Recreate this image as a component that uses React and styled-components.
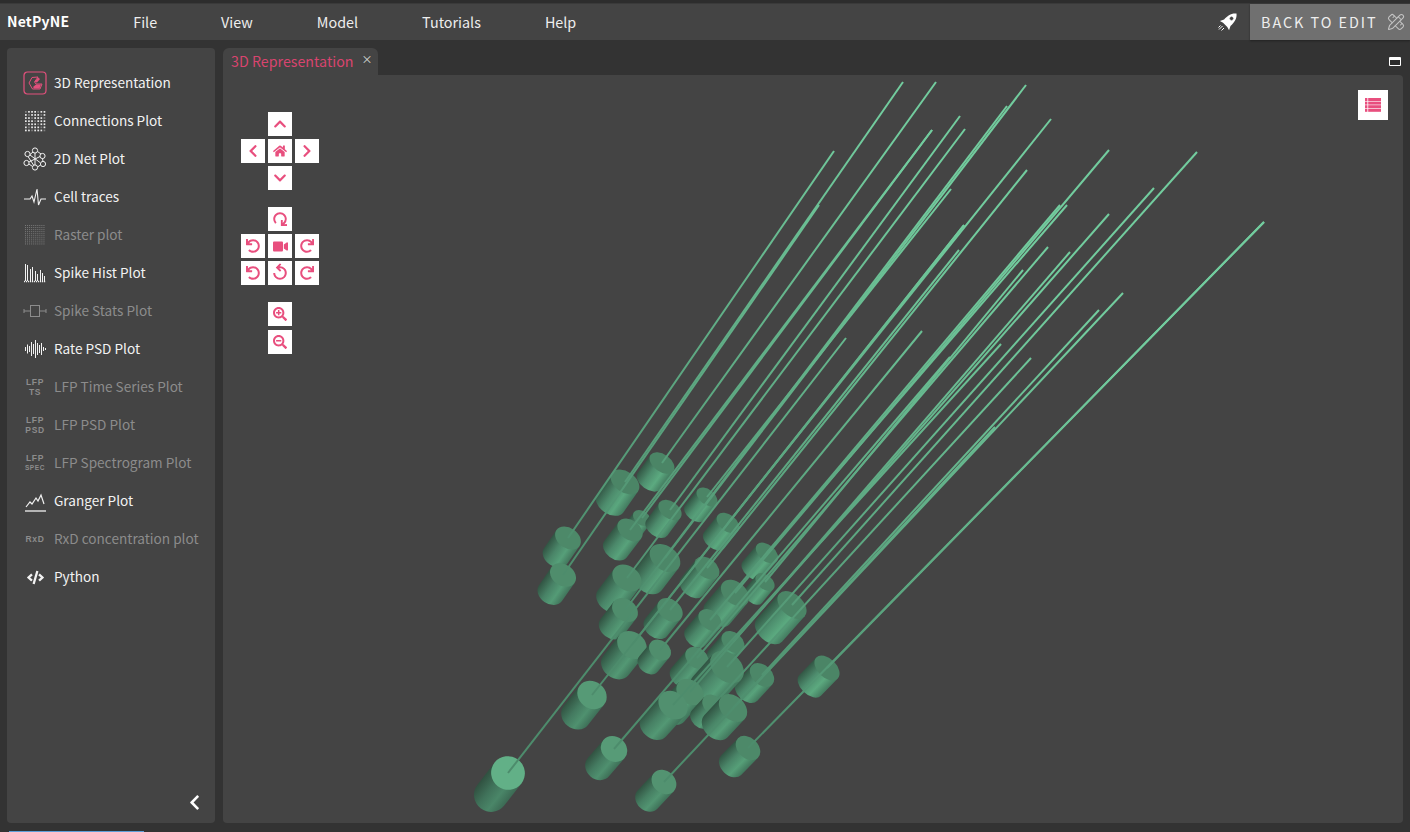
import React from 'react';
import styled, { createGlobalStyle } from 'styled-components';
import {
  FaChevronUp, FaChevronDown, FaChevronLeft, FaChevronRight, FaHome, FaVideo,
  FaUndo, FaRedo, FaSearchPlus, FaSearchMinus, FaCode,
} from 'react-icons/fa';
import { PencilRuler } from 'lucide-react';

const PINK = '#e84f7e';

const GlobalStyle = createGlobalStyle`
  html, body, #root { height: 100%; margin: 0; }
  body {
    background: #333;
    font-family: "Noto Sans CJK SC", "Noto Sans", sans-serif;
    overflow: hidden;
  }
`;

const Page = styled.div`
  display: flex;
  flex-direction: column;
  height: 832px;
  background: #333;
  border-top: 3px solid #2d2d2d;
  box-sizing: border-box;
`;

const TopBar = styled.header`
  display: flex;
  align-items: center;
  gap: 64px;
  height: 37px;
  flex: none;
  padding-left: 7px;
  background: #444;
  border-top: 1px solid #3a3a3a;
  box-sizing: border-box;
`;

const Brand = styled.div`
  font-size: 14px;
  font-weight: 700;
  color: #fff;
  letter-spacing: 0.2px;
  padding-bottom: 2px;
`;

const MenuItem = styled.div`
  font-size: 14.35px;
  color: #eee;
  padding-bottom: 2px;
`;

const TopActions = styled.div`
  display: flex;
  align-items: center;
  align-self: stretch;
  margin-left: auto;
  gap: 11px;
`;

const BackButton = styled.button`
  display: flex;
  align-items: center;
  gap: 9px;
  width: 160px;
  height: 100%;
  padding: 0 0 2px 11px;
  border: none;
  background: #707070;
  color: #eee;
  font: inherit;
  font-size: 14.4px;
  letter-spacing: 1.95px;
  white-space: nowrap;
  box-shadow: 0 1px 2px rgba(0, 0, 0, 0.35);
  svg { color: #c4c4c4; flex: none; margin-top: 2px; }
`;

const Body = styled.div`
  flex: 1;
  min-height: 0;
  display: grid;
  grid-template-columns: 208px 1180px;
  gap: 8px;
  padding: 8px 7px 8px;
`;

const Sidebar = styled.aside`
  display: flex;
  flex-direction: column;
  background: #444;
  border-radius: 4px;
  padding: 16px 12px 12px 16px;
`;

const NavRow = styled.div`
  display: flex;
  align-items: center;
  gap: 7px;
  height: 38px;
  flex: none;
  font-size: 13.6px;
  white-space: nowrap;
  color: ${(p) => (p.$off ? '#8c8c8c' : '#f2f2f2')};
`;

const NavLabel = styled.span`
  padding-bottom: 2px;
`;

const NavIcon = styled.div`
  width: 24px;
  height: 24px;
  flex: none;
  display: flex;
  flex-direction: column;
  align-items: center;
  justify-content: center;
  color: ${(p) => (p.$off ? '#8c8c8c' : '#f2f2f2')};
`;

const LfpTag = styled.span`
  display: block;
  font-family: "Liberation Sans", sans-serif;
  font-size: ${(p) => p.$size}px;
  font-weight: 700;
  line-height: 10px;
  letter-spacing: 0.6px;
  color: #8c8c8c;
`;

const Collapse = styled.div`
  display: flex;
  margin-top: auto;
  align-self: flex-end;
  color: #fff;
`;

const Workspace = styled.main`
  display: flex;
  flex-direction: column;
  min-width: 0;
`;

const TabStrip = styled.div`
  display: flex;
  align-items: stretch;
  justify-content: space-between;
  height: 27px;
  flex: none;
`;

const Tab = styled.div`
  display: flex;
  align-items: center;
  gap: 8px;
  width: 155px;
  box-sizing: border-box;
  padding: 0 0 2px 8px;
  background: #444;
  border-radius: 6px 6px 0 0;
  font-size: 14.25px;
  color: #d9446f;
  white-space: nowrap;
`;

const TabClose = styled.span`
  font-size: 11px;
  line-height: 1;
  color: #ddd;
  margin-top: -2px;
`;

const Maximize = styled.div`
  width: 12px;
  height: 9px;
  margin: 9px 2px 0 0;
  box-sizing: border-box;
  border: 1.5px solid #fff;
  border-top-width: 3px;
  border-radius: 1px;
  background: #2b2b2b;
`;

const Canvas = styled.div`
  position: relative;
  flex: 1;
  min-height: 0;
  background: #444;
  border-radius: 0 4px 4px 4px;
  overflow: hidden;
`;

const Scene = styled.svg`
  display: block;
  width: 100%;
  height: 100%;
`;

const Controls = styled.div`
  position: absolute;
  left: 18px;
  top: 37px;
  display: flex;
  flex-direction: column;
  gap: 17px;
`;

const ControlGroup = styled.div`
  display: grid;
  grid-template-columns: repeat(3, 24px);
  grid-auto-rows: 24px;
  gap: ${(p) => p.$gap || 3}px 3px;
`;

const CtrlButton = styled.button`
  grid-column: ${(p) => p.$col};
  width: 24px;
  height: 24px;
  padding: 0;
  border: none;
  background: #fff;
  color: ${PINK};
  display: flex;
  align-items: center;
  justify-content: center;
  svg { transform: rotate(${(p) => p.$rot || 0}deg); }
`;

const ListButton = styled.button`
  position: absolute;
  top: 15px;
  right: 15px;
  width: 30px;
  height: 30px;
  padding: 0;
  border: none;
  background: #fff;
  color: ${PINK};
  display: flex;
  align-items: center;
  justify-content: center;
`;

const Footer = styled.div`
  height: 1px;
  flex: none;
  padding-left: 9px;
  &::before {
    content: '';
    display: block;
    width: 135px;
    height: 1px;
    background: #5f9fd8;
  }
`;

// face centre, radius, body length, far end of the neurite
const CELLS = [
  [662, 463, 14, 22, 936, 82],
  [625, 482, 16, 26, 903, 82],
  [568, 538, 14, 22, 834, 151],
  [563, 575, 14, 22, 819, 205],
  [707, 497, 12, 20, 951, 189],
  [642, 518, 10, 16, 932, 130],
  [670, 510, 13, 22, 960, 116],
  [630, 530, 14, 24, 932, 130],
  [728, 523, 13, 22, 1051, 119],
  [767, 553, 13, 22, 1067, 205],
  [665, 558, 17, 28, 1026, 85],
  [707, 568, 14, 24, 1027, 170],
  [765, 582, 11, 18, 1023, 270],
  [627, 578, 16, 27, 965, 129],
  [735, 593, 16, 27, 1109, 150],
  [792, 605, 17, 34, 1197, 152],
  [625, 610, 14, 22, 1007, 106],
  [670, 610, 14, 22, 959, 250],
  [710, 620, 13, 22, 1060, 205],
  [733, 642, 13, 22, 1109, 214],
  [632, 645, 16, 26, 964, 225],
  [660, 650, 12, 18, 922, 331],
  [697, 658, 13, 24, 1048, 247],
  [762, 675, 14, 22, 1099, 310],
  [727, 667, 19, 30, 1154, 188],
  [690, 692, 15, 26, 1070, 252],
  [713, 705, 12, 18, 1031, 358],
  [673, 705, 16, 28, 1001, 344],
  [733, 708, 16, 25, 995, 427],
  [592, 695, 15.5, 26, 964, 225],
  [827, 668, 15, 24, 1264, 222],
  [748, 748, 14, 24, 1264, 222],
  [614, 749, 14, 24, 950, 357],
  [664, 782, 13.5, 24, 1123, 293],
  [508, 773, 17, 28, 846, 338],
];

const mix = (a, b, t) => {
  const k = Math.max(0, Math.min(1, t));
  return `rgb(${a.map((v, i) => Math.round(v + (b[i] - v) * k)).join(',')})`;
};

const Cell = ({ id, fx, fy, r, len, tx, ty }) => {
  const angle = (Math.atan2(fy - ty, fx - tx) * 180) / Math.PI;
  const dist = Math.hypot(fx - 508, fy - 773);
  const squash = Math.max(0.6, 0.98 - dist * 0.00105);
  const t = (squash - 0.62) / 0.34;
  const face = mix([75, 133, 102], [98, 176, 135], t * t);
  return (
    <>
      <linearGradient id={`body${id}`} x1="0" y1="0" x2="0" y2="1">
        <stop offset="0" stopColor={mix([68, 124, 96], [60, 106, 84], t)} />
        <stop offset="0.3" stopColor={mix([92, 170, 128], [74, 134, 104], t)} />
        <stop offset="0.62" stopColor={mix([78, 142, 110], [64, 114, 90], t)} />
        <stop offset="1" stopColor={mix([50, 86, 68], [48, 80, 64], t)} />
      </linearGradient>
      <g transform={`translate(${fx} ${fy}) rotate(${angle})`}>
        <path
          d={`M0 ${-r}L${len} ${-r}A${r * squash} ${r} 0 0 1 ${len} ${r}L0 ${r}Z`}
          fill={`url(#body${id})`}
        />
        <ellipse rx={r * squash} ry={r} fill={face} />
      </g>
      <line x1={fx} y1={fy} x2={tx} y2={ty} stroke="url(#neurite)" strokeWidth="2" />
    </>
  );
};

const Dots = ({ n, gap, size, opacity }) => {
  const cells = [];
  for (let y = 0; y < n; y++) {
    for (let x = 0; x < n; x++) {
      const o = typeof opacity === 'function' ? opacity(x, y) : opacity;
      cells.push(<rect key={`${x}-${y}`} x={x * gap} y={y * gap} width={size} height={size} fill="currentColor" opacity={o} />);
    }
  }
  return <g transform="translate(2 2)">{cells}</g>;
};

const Icon = ({ children }) => (
  <svg width="24" height="24" viewBox="0 0 24 24" fill="none" stroke="currentColor" strokeWidth="1">{children}</svg>
);

const Rocket = () => (
  <svg width="22" height="22" viewBox="0 0 22 22">
    <g transform="rotate(45 11 11) translate(11 9)">
      <path d="M0 -10C4 -7 5 -2 4.5 3L6.5 7L3 6L-3 6L-6.5 7L-4.5 3C-5 -2 -4 -7 0 -10Z" fill="#fff" />
      <circle cy="-3" r="2.2" fill="#444" stroke="#fff" strokeWidth="0.8" />
    </g>
    <path d="M5.5 15L2 18.5M7 17L4.5 19.5M3.5 14.5L1.5 16.5" stroke="#fff" strokeWidth="1" fill="none" />
  </svg>
);

const ListGlyph = () => (
  <svg width="16" height="14" viewBox="0 0 16 14" fill="currentColor">
    {[0, 3.6, 7.2, 10.8].map((y) => (
      <g key={y}>
        <rect x="0" y={y} width="2.4" height="3" />
        <rect x="3.2" y={y} width="12.8" height="3" />
      </g>
    ))}
  </svg>
);

const ICONS = {
  rep: (
    <svg width="24" height="24" viewBox="0 0 24 24" fill="none">
      <rect x="1" y="1" width="22" height="22" rx="3.5" stroke="#e2507c" strokeWidth="1.2" />
      <path d="M15 6L9 6.5L6 12L9.5 18L17 18L19 13L13 13L11.5 11Z" stroke="#e2507c" strokeWidth="1" />
      <path d="M11.5 11L15 6.5L17 8L14 11.5ZM10 16L13 13.5L18 13.5L16.5 17.5L11 17.5Z" fill="#e2507c" />
    </svg>
  ),
  conn: (
    <Icon>
      <g stroke="none">
        <Dots n={7} gap={3.1} size={1.7} opacity={(x, y) => ((x * 3 + y * 5) % 4 === 0 ? 0.35 : 0.95)} />
      </g>
    </Icon>
  ),
  net: (
    <Icon>
      <circle cx="12" cy="3.5" r="2.6" />
      <circle cx="4.5" cy="7" r="2.6" />
      <circle cx="19.5" cy="9" r="2.6" />
      <circle cx="3.5" cy="16" r="2.6" />
      <circle cx="12" cy="20.5" r="2.6" />
      <circle cx="20" cy="17" r="2.6" />
      <path d="M7 7.5L10 5M14.5 4.5L18 7M5 9.5L10.5 18M19.5 11.5L20 14.5M6 17L9.5 19.5M14.5 20L17.5 18M12 6L12 18M7 8L17 15.5M17 9.5L6 15" />
    </Icon>
  ),
  trace: (
    <Icon>
      <path d="M1 14L7 14L9 11L11 17L14 4L15.5 20L18 14L23 14" strokeWidth="1.1" />
    </Icon>
  ),
  raster: (
    <Icon>
      <g stroke="none">
        <Dots n={10} gap={2.05} size={1} opacity={0.75} />
      </g>
    </Icon>
  ),
  hist: (
    <Icon>
      <path d="M2.5 20L2.5 3M4.5 20L4.5 4M7.5 20L7.5 8M9.5 20L9.5 6M12.5 20L12.5 10M14.5 20L14.5 13M17.5 20L17.5 9M19.5 20L19.5 12M21.5 20L21.5 15" strokeWidth="1" />
      <path d="M1 20.5L23 20.5" strokeWidth="1.6" strokeDasharray="1.2 0.8" />
    </Icon>
  ),
  stats: (
    <Icon>
      <rect x="7.5" y="6.5" width="9" height="11" />
      <path d="M1 12L7 12M17 12L23 12M1 10L1 14M23 10L23 14" />
    </Icon>
  ),
  psd: (
    <Icon>
      <path d="M2.5 10L2.5 14M4.5 7.5L4.5 16.5M6.5 9L6.5 15M8.5 5L8.5 19M10.5 7L10.5 17M12.5 3L12.5 21M14.5 6L14.5 18M16.5 8L16.5 16M18.5 6L18.5 18M20.5 10L20.5 14M22.5 11L22.5 13" strokeWidth="1" />
    </Icon>
  ),
  granger: (
    <Icon>
      <path d="M3 18L7 13L9 15L13 9L15 12L18 6L21 15" strokeWidth="1.2" />
      <path d="M2 22L23 22" strokeWidth="1.3" />
    </Icon>
  ),
};

const ITEMS = [
  { label: '3D Representation', icon: ICONS.rep },
  { label: 'Connections Plot', icon: ICONS.conn },
  { label: '2D Net Plot', icon: ICONS.net },
  { label: 'Cell traces', icon: ICONS.trace },
  { label: 'Raster plot', icon: ICONS.raster, off: true },
  { label: 'Spike Hist Plot', icon: ICONS.hist },
  { label: 'Spike Stats Plot', icon: ICONS.stats, off: true },
  { label: 'Rate PSD Plot', icon: ICONS.psd },
  { label: 'LFP Time Series Plot', tag: ['LFP', 'TS'], off: true },
  { label: 'LFP PSD Plot', tag: ['LFP', 'PSD'], off: true },
  { label: 'LFP Spectrogram Plot', tag: ['LFP', 'SPEC'], small: true, off: true },
  { label: 'Granger Plot', icon: ICONS.granger },
  { label: 'RxD concentration plot', tag: ['RxD'], off: true },
  { label: 'Python', icon: <FaCode size={17} /> },
];

const CONTROL_GROUPS = [
  {
    items: [
      { col: 2, Glyph: FaChevronUp },
      { col: 1, Glyph: FaChevronLeft },
      { col: 2, Glyph: FaHome, size: 14 },
      { col: 3, Glyph: FaChevronRight },
      { col: 2, Glyph: FaChevronDown },
    ],
  },
  {
    items: [
      { col: 2, Glyph: FaRedo, rot: 90 },
      { col: 1, Glyph: FaUndo },
      { col: 2, Glyph: FaVideo, size: 15 },
      { col: 3, Glyph: FaRedo },
      { col: 1, Glyph: FaUndo },
      { col: 2, Glyph: FaUndo, rot: 45 },
      { col: 3, Glyph: FaRedo },
    ],
  },
  {
    gap: 4,
    items: [
      { col: 2, Glyph: FaSearchPlus },
      { col: 2, Glyph: FaSearchMinus },
    ],
  },
];

const MENU = ['File', 'View', 'Model', 'Tutorials', 'Help'];

export default function App() {
  return (
    <>
      <GlobalStyle />
      <Page>
        <TopBar>
          <Brand>NetPyNE</Brand>
          {MENU.map((m) => <MenuItem key={m}>{m}</MenuItem>)}
          <TopActions>
            <Rocket />
            <BackButton>
              BACK TO EDIT
              <PencilRuler size={18} strokeWidth={1.4} />
            </BackButton>
          </TopActions>
        </TopBar>
        <Body>
          <Sidebar>
            {ITEMS.map((item) => (
              <NavRow key={item.label} $off={item.off}>
                <NavIcon $off={item.off}>
                  {item.icon}
                  {item.tag && item.tag.map((t, i) => (
                    <LfpTag key={t} $size={item.small && i === 1 ? 6.5 : 8.5}>{t}</LfpTag>
                  ))}
                </NavIcon>
                <NavLabel>{item.label}</NavLabel>
              </NavRow>
            ))}
            <Collapse><FaChevronLeft size={17} /></Collapse>
          </Sidebar>
          <Workspace>
            <TabStrip>
              <Tab>
                3D Representation
                <TabClose>×</TabClose>
              </Tab>
              <Maximize />
            </TabStrip>
            <Canvas>
              <Scene viewBox="223 75 1180 748" preserveAspectRatio="none">
                <defs>
                  <linearGradient id="neurite" gradientUnits="userSpaceOnUse" x1="640" y1="640" x2="1000" y2="250">
                    <stop offset="0" stopColor="#4d8c6c" />
                    <stop offset="1" stopColor="#72cc9e" />
                  </linearGradient>
                </defs>
                {CELLS.map(([fx, fy, r, len, tx, ty], i) => (
                  <Cell key={i} id={i} fx={fx} fy={fy} r={r} len={len} tx={tx} ty={ty} />
                ))}
              </Scene>
              <Controls>
                {CONTROL_GROUPS.map((group, g) => (
                  <ControlGroup key={g} $gap={group.gap}>
                    {group.items.map(({ col, Glyph, size, rot }, i) => (
                      <CtrlButton key={i} $col={col} $rot={rot}>
                        <Glyph size={size || 14} />
                      </CtrlButton>
                    ))}
                  </ControlGroup>
                ))}
              </Controls>
              <ListButton><ListGlyph /></ListButton>
            </Canvas>
          </Workspace>
        </Body>
        <Footer />
      </Page>
    </>
  );
}
